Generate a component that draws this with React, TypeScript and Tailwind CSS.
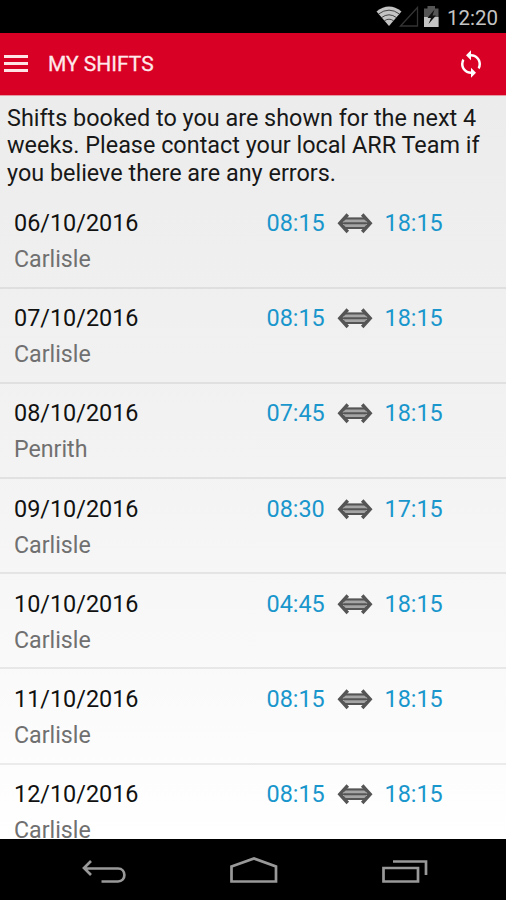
import { MdSync } from 'react-icons/md';

const shifts = [
  { date: '06/10/2016', place: 'Carlisle', start: '08:15', end: '18:15' },
  { date: '07/10/2016', place: 'Carlisle', start: '08:15', end: '18:15' },
  { date: '08/10/2016', place: 'Penrith', start: '07:45', end: '18:15' },
  { date: '09/10/2016', place: 'Carlisle', start: '08:30', end: '17:15' },
  { date: '10/10/2016', place: 'Carlisle', start: '04:45', end: '18:15' },
  { date: '11/10/2016', place: 'Carlisle', start: '08:15', end: '18:15' },
  { date: '12/10/2016', place: 'Carlisle', start: '08:15', end: '18:15' },
];

function StatusBar() {
  return (
    <div className="h-[32.5px] shrink-0 bg-black flex items-start justify-end pr-2 text-[#c4c4c4]">
      <svg width="63" height="32" viewBox="0 0 63 32" className="mr-2">
        <path d="M0.500 11.500Q13 1.500 25.500 11.500L13 26Z" fill="#c4c4c4" />
        <path d="M2.500 14Q13 6.300 23.500 14M5.500 17.600Q13 12 20.500 17.600M8.400 20.800Q13 17.600 17.600 20.800" fill="none" stroke="#222" strokeWidth="0.8" />
        <path d="M24.500 26L41.500 7.500V26Z" fill="none" stroke="#333" strokeWidth="1.3" />
        <path d="M48 8.500H51.500V6H59V8.500H62.500V27H48Z" fill="#555" />
        <path d="M48 17H62.500V27H48Z" fill="#c4c4c4" />
        <path d="M58.500 9.500L51.500 18H55L52.500 24L60 15.500H56.500Z" fill="#111" />
      </svg>
      <span className="text-[20.5px] leading-[36px]">12:20</span>
    </div>
  );
}

function Header() {
  return (
    <header className="h-[63px] shrink-0 bg-[#d90026] border-b border-[#e49aa3] text-[#ffe9ea] flex items-center pl-1 pr-5">
      <div className="w-6 flex flex-col gap-1">
        <div className="h-[3px] bg-[#ffe4e6]" />
        <div className="h-[3px] bg-[#ffe4e6]" />
        <div className="h-[3px] bg-[#ffe4e6]" />
      </div>
      <h1 className="ml-5 pt-[3px] flex-1 text-[21px] [-webkit-text-stroke:0.3px]">MY SHIFTS</h1>
      <MdSync className="w-[30px] h-[30px] text-white" />
    </header>
  );
}

function DoubleArrow() {
  return (
    <svg width="36" height="22" viewBox="0 0 36 22" fill="none" stroke="#555">
      <path d="M7 5.500H29V17H7Z" fill="#a5a5a5" stroke="none" />
      <path d="M7 6.500H29M4 11.200H32M7 16H29" strokeWidth="2" />
      <path d="M10.800 2.500L2.800 11.200L10.800 20M25.200 2.500L33.200 11.200L25.200 20" strokeWidth="3.4" />
    </svg>
  );
}

function ShiftRow({ date, place, start, end }: (typeof shifts)[number]) {
  return (
    <li className="h-[95.2px] shrink-0 border-b-2 border-black/[0.07] pl-3.5 pt-[15.5px] text-[23.4px] leading-7">
      <div className="flex items-center">
        <span className="w-[252.5px] text-[#111]">{date}</span>
        <span className="w-[70px] text-[#1996cc]">{start}</span>
        <DoubleArrow />
        <span className="ml-3 text-[#1996cc]">{end}</span>
      </div>
      <div className="mt-2 text-[23.2px] text-[#707070]">{place}</div>
    </li>
  );
}

function NavBar() {
  return (
    <nav className="h-[61px] shrink-0 bg-black">
      <svg width="506" height="61" viewBox="0 0 506 61" fill="none" stroke="#999" strokeWidth="2.7">
        <path d="M91 22L84 29L91 36M84 29.500H118C126.500 29.500 126.500 42.500 118 42.500H101.500" />
        <path d="M231.500 27.500L254 19.500L276 27.500V42.500H231.500Z" />
        <path d="M383.500 29H418V42.500H383.500ZM393 22.500H426V36" />
      </svg>
    </nav>
  );
}

export default function App() {
  return (
    <div className="w-[506px] h-[900px] overflow-hidden flex flex-col font-['Roboto',sans-serif]">
      <StatusBar />
      <Header />
      <main className="flex-1 min-h-0 overflow-hidden flex flex-col bg-linear-to-b from-[#ececec] via-[#f3f3f3] to-white">
        <p className="shrink-0 h-[98px] pl-[7px] pt-[9.5px] text-[23.4px] leading-[27.3px] text-[#181818]">
          Shifts booked to you are shown for the next 4<br />
          weeks. Please contact your local ARR Team if<br />
          you believe there are any errors.
        </p>
        <ul className="flex flex-col">
          {shifts.map((shift) => (
            <ShiftRow key={shift.date} {...shift} />
          ))}
        </ul>
      </main>
      <NavBar />
    </div>
  );
}
